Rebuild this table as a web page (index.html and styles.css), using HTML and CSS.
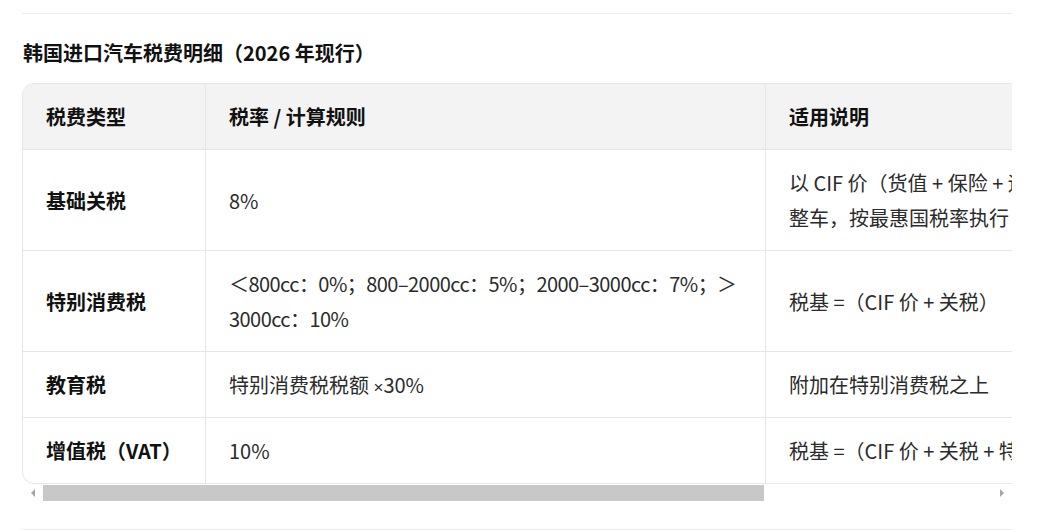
FILE: index.html
```html
<!DOCTYPE html>
<html lang="zh-CN">
<head>
<meta charset="utf-8">
<title>韩国进口汽车税费明细</title>
<link rel="stylesheet" href="styles.css">
</head>
<body>
<div class="page">
  <hr class="rule">
  <h3 class="title">韩国进口汽车税费明细（2026 年现行）</h3>
  <div class="table-wrap">
    <table class="tax">
      <colgroup>
        <col class="c1">
        <col class="c2">
        <col class="c3">
      </colgroup>
      <thead>
        <tr><th>税费类型</th><th>税率 / 计算规则</th><th>适用说明</th></tr>
      </thead>
      <tbody>
        <tr><td class="name">基础关税</td><td>8%</td><td>以 CIF 价（货值 + 保险 + 运费）计税，适用于乘用车<br>整车，按最惠国税率执行</td></tr>
        <tr><td class="name">特别消费税</td><td class="tight">＜800cc：0%；800–2000cc：5%；2000–3000cc：7%；＞3000cc：10%</td><td>税基 =（CIF 价 + 关税）</td></tr>
        <tr><td class="name">教育税</td><td>特别消费税税额 <span class="lat">×</span>30%</td><td>附加在特别消费税之上</td></tr>
        <tr><td class="name">增值税（VAT）</td><td>10%</td><td>税基 =（CIF 价 + 关税 + 特别消费税 + 教育税）</td></tr>
      </tbody>
    </table>
  </div>
  <div class="scrollbar" aria-hidden="true">
    <div class="sb-btn"><span class="tri left"></span></div>
    <div class="sb-thumb"></div>
    <div class="sb-track"></div>
    <div class="sb-btn"><span class="tri right"></span></div>
  </div>
  <hr class="rule bottom">
</div>
</body>
</html>
```
FILE: styles.css
```css
html, body {
  margin: 0;
  padding: 0;
  background: #ffffff;
}
body {
  font-family: "Noto Sans CJK SC", "Noto Sans", sans-serif;
  color: #2b2b2b;
}
.page {
  width: 990px;
  padding: 0 0 0 22px;
}
.rule {
  border: 0;
  border-top: 1px solid #ececec;
  margin: 13px 0 0 0;
  height: 0;
}
.rule.bottom {
  margin-top: 28px;
}
.title {
  margin: 24px 0 15px 1px;
  font-size: 20px;
  line-height: 30px;
  font-weight: 700;
  color: #111111;
}
.table-wrap {
  overflow: hidden;
}
.tax {
  width: 1304px;
  table-layout: fixed;
  border-collapse: separate;
  border-spacing: 0;
  border: 1px solid #e6e6e6;
  border-radius: 12px;
  overflow: hidden;
  font-size: 20px;
}
.c1 { width: 183px; }
.c2 { width: 560px; }
.c3 { width: 561px; }
.tax th, .tax td {
  padding: 15px 23px;
  line-height: 35px;
  text-align: left;
  vertical-align: middle;
  border-bottom: 1px solid #e6e6e6;
  border-right: 1px solid #e6e6e6;
}
.tax th:last-child, .tax td:last-child {
  border-right: 0;
}
.tax tbody tr:last-child td {
  border-bottom: 0;
}
.tax thead th {
  background: #f3f3f3;
  font-weight: 700;
  color: #111111;
}
.tax td.name {
  font-weight: 700;
  color: #111111;
}
.tax td.tight {
  letter-spacing: -0.55px;
  padding-right: 18px;
}
.lat {
  font-family: "Liberation Sans", sans-serif;
  font-size: 17px;
  line-height: 17px;
}
.scrollbar {
  display: flex;
  height: 16px;
  margin-top: 1px;
}
.sb-btn {
  width: 21px;
  display: flex;
  align-items: center;
  justify-content: center;
}
.sb-thumb {
  width: 721px;
  background: #c8c8c8;
}
.sb-track {
  flex: 1;
}
.tri {
  width: 0;
  height: 0;
  border-top: 4px solid transparent;
  border-bottom: 4px solid transparent;
}
.tri.left {
  border-right: 4px solid #a6a6a6;
}
.tri.right {
  border-left: 4px solid #a6a6a6;
}
```
